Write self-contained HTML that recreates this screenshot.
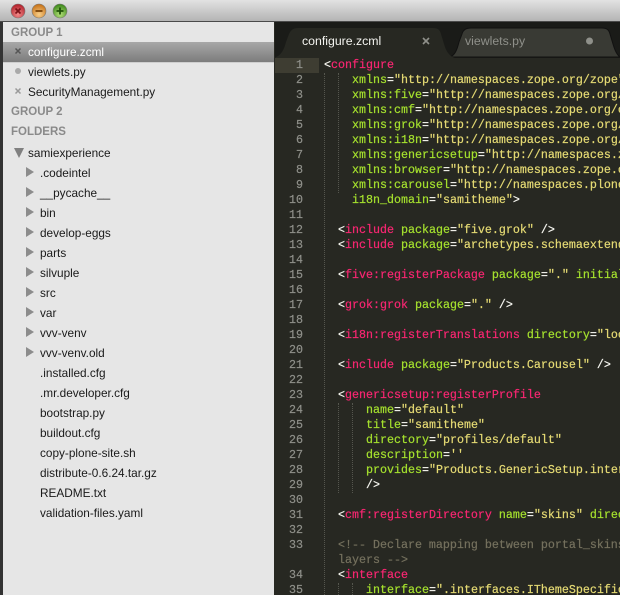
<!DOCTYPE html>
<html><head><meta charset="utf-8"><style>
html,body{margin:0;padding:0;background:#272822}
#r{position:relative;width:620px;height:595px;overflow:hidden;font-family:"Liberation Sans",sans-serif}
#r div{position:absolute}
.tb{left:0;top:0;width:620px;height:21px;background:linear-gradient(#e2e2e2,#b4b4b4);border-bottom:1px solid #4a4a4a}
.sb{left:3px;top:22px;width:271px;height:573px;background:#e6e6e6}
.h{left:11px;font-size:11.5px;font-weight:bold;color:#8a8a8a;line-height:14px}
.f{font-size:11.8px;color:#1a1a1a;line-height:14px;white-space:pre}
.sel{left:3px;top:42px;width:271px;height:20px;background:linear-gradient(#a8a8a8,#7c7c7c)}
.tabs{left:275px;top:22px;width:345px;height:36px;background:#1a1b18}
.gut{left:275px;width:28px;text-align:right;font:11.67px/15px "Liberation Mono",monospace;color:#8f908a;-webkit-text-stroke:.2px #8f908a}
.c{white-space:pre;font:11.67px/15px "Liberation Mono",monospace;color:#f8f8f2;-webkit-text-stroke:.2px}
.c i{font-style:normal}
.t{color:#f92672}.a{color:#a6e22e}.s{color:#e6db74}.m{color:#75715e}
.g{width:0;border-left:1px dotted #55564e}
</style></head><body><div id="r">
<div style="left:0;top:0;width:620px;height:595px;background:#272822"></div>
<div style="left:0;top:22px;width:3px;height:573px;background:#333"></div>
<div class="tb"></div>
<svg style="position:absolute;left:0;top:0" width="80" height="22">
<defs>
<radialGradient id="a1" cx=".5" cy=".75" r=".7"><stop offset="0" stop-color="#f28a8a"/><stop offset="1" stop-color="#b3222c"/></radialGradient>
<radialGradient id="a2" cx=".5" cy=".75" r=".7"><stop offset="0" stop-color="#f8cf8a"/><stop offset="1" stop-color="#c8741a"/></radialGradient>
<radialGradient id="a3" cx=".5" cy=".75" r=".7"><stop offset="0" stop-color="#b4e07a"/><stop offset="1" stop-color="#3f8a1c"/></radialGradient>
</defs>
<circle cx="18" cy="11" r="7" fill="url(#a1)" stroke="#777" stroke-width=".6"/>
<circle cx="39" cy="11" r="7" fill="url(#a2)" stroke="#777" stroke-width=".6"/>
<circle cx="60" cy="11" r="7" fill="url(#a3)" stroke="#777" stroke-width=".6"/>
<path d="M15.5 8.5l5 5M20.5 8.5l-5 5" stroke="#7a1218" stroke-width="1.6"/>
<path d="M35.5 11h7" stroke="#7a4308" stroke-width="1.8"/>
<path d="M56.5 11h7M60 7.500v7" stroke="#1f5208" stroke-width="1.8"/>
</svg>
<div class="sb"></div>
<div class="sel"></div>
<div style="left:3px;top:62px;width:271px;height:1px;background:#cfcfcf"></div>
<div class="h" style="top:26px">GROUP 1</div>
<div class="h" style="top:105px">GROUP 2</div>
<div class="h" style="top:125px">FOLDERS</div>
<svg style="position:absolute;left:0;top:0" width="60" height="360">
<path d="M15.500 48.500l5 5M20.500 48.500l-5 5" stroke="#555" stroke-width="1.5"/>
<circle cx="18" cy="71" r="3" fill="#aaa"/>
<path d="M15.500 88.500l5 5M20.500 88.500l-5 5" stroke="#999" stroke-width="1.5"/>
<path d="M14 148h10l-5 10z" fill="#808080"/>
<g fill="#8c8c8c">
<path d="M26 167v10l8-5z"/><path d="M26 187v10l8-5z"/><path d="M26 207v10l8-5z"/><path d="M26 227v10l8-5z"/>
<path d="M26 247v10l8-5z"/><path d="M26 267v10l8-5z"/><path d="M26 287v10l8-5z"/><path d="M26 307v10l8-5z"/>
<path d="M26 327v10l8-5z"/><path d="M26 347v10l8-5z"/>
</g>
</svg>
<div class="f" style="left:28px;top:45px;color:#fff">configure.zcml</div>
<div class="f" style="left:28px;top:65px">viewlets.py</div>
<div class="f" style="left:28px;top:85px">SecurityManagement.py</div>
<div class="f" style="left:28px;top:146px">samiexperience</div>
<div class="f" style="left:40px;top:166px">.codeintel</div>
<div class="f" style="left:40px;top:186px">__pycache__</div>
<div class="f" style="left:40px;top:206px">bin</div>
<div class="f" style="left:40px;top:226px">develop-eggs</div>
<div class="f" style="left:40px;top:246px">parts</div>
<div class="f" style="left:40px;top:266px">silvuple</div>
<div class="f" style="left:40px;top:286px">src</div>
<div class="f" style="left:40px;top:306px">var</div>
<div class="f" style="left:40px;top:326px">vvv-venv</div>
<div class="f" style="left:40px;top:346px">vvv-venv.old</div>
<div class="f" style="left:40px;top:366px">.installed.cfg</div>
<div class="f" style="left:40px;top:386px">.mr.developer.cfg</div>
<div class="f" style="left:40px;top:406px">bootstrap.py</div>
<div class="f" style="left:40px;top:426px">buildout.cfg</div>
<div class="f" style="left:40px;top:446px">copy-plone-site.sh</div>
<div class="f" style="left:40px;top:466px">distribute-0.6.24.tar.gz</div>
<div class="f" style="left:40px;top:486px">README.txt</div>
<div class="f" style="left:40px;top:506px">validation-files.yaml</div>

<div class="tabs"></div>
<svg style="position:absolute;left:275px;top:22px" width="345" height="36">
<path d="M175 35C180 33 182 28 184 20L187 12C188 8 191 6 196 6H327C332 6 334 8 335 12L338 22C340 29 342 33 345 35Z" fill="#393a34" stroke="#111" stroke-width="1"/>
<path d="M1 35C6 33 9 28 11 20L14 12C16 8 18 6 23 6H158C163 6 165 8 166 12L169 22C171 29 174 34 180 36H0Z" fill="#272822"/>
</svg>
<div style="left:302px;top:34px;font-size:12.3px;line-height:14px;color:#f4f4f0">configure.zcml</div>
<div style="left:465px;top:34px;font-size:12.300px;line-height:14px;color:#8f908a">viewlets.py</div>
<svg style="position:absolute;left:420px;top:35px" width="180" height="12">
<path d="M3 3l6 6M9 3l-6 6" stroke="#8f908a" stroke-width="1.6"/>
<circle cx="169.500" cy="6" r="3.500" fill="#8f908a"/>
</svg>
<div style="left:275px;top:58px;width:44px;height:15px;background:#3e3d32"></div>

<div class="g" style="left:324px;top:73px;height:522px"></div>
<div class="g" style="left:338px;top:73px;height:120px"></div>
<div class="g" style="left:338px;top:403px;height:90px"></div>
<div class="g" style="left:352px;top:403px;height:90px"></div>
<div class="g" style="left:338px;top:583px;height:12px"></div>
<div class="g" style="left:352px;top:583px;height:12px"></div>

<div class="gut" style="top:58px">1</div><div class="gut" style="top:73px">2</div><div class="gut" style="top:88px">3</div><div class="gut" style="top:103px">4</div><div class="gut" style="top:118px">5</div><div class="gut" style="top:133px">6</div><div class="gut" style="top:148px">7</div><div class="gut" style="top:163px">8</div><div class="gut" style="top:178px">9</div><div class="gut" style="top:193px">10</div><div class="gut" style="top:208px">11</div><div class="gut" style="top:223px">12</div><div class="gut" style="top:238px">13</div><div class="gut" style="top:253px">14</div><div class="gut" style="top:268px">15</div><div class="gut" style="top:283px">16</div><div class="gut" style="top:298px">17</div><div class="gut" style="top:313px">18</div><div class="gut" style="top:328px">19</div><div class="gut" style="top:343px">20</div><div class="gut" style="top:358px">21</div><div class="gut" style="top:373px">22</div><div class="gut" style="top:388px">23</div><div class="gut" style="top:403px">24</div><div class="gut" style="top:418px">25</div><div class="gut" style="top:433px">26</div><div class="gut" style="top:448px">27</div><div class="gut" style="top:463px">28</div><div class="gut" style="top:478px">29</div><div class="gut" style="top:493px">30</div><div class="gut" style="top:508px">31</div><div class="gut" style="top:523px">32</div><div class="gut" style="top:538px">33</div><div class="gut" style="top:568px">34</div><div class="gut" style="top:583px">35</div>

<div class="c" style="left:324px;top:58px">&lt;<i class="t">configure</i></div>
<div class="c" style="left:352px;top:73px"><i class="a">xmlns</i>=<i class="s">"http://namespaces.zope.org/zope"</i></div>
<div class="c" style="left:352px;top:88px"><i class="a">xmlns:five</i>=<i class="s">"http://namespaces.zope.org/five"</i></div>
<div class="c" style="left:352px;top:103px"><i class="a">xmlns:cmf</i>=<i class="s">"http://namespaces.zope.org/cmf"</i></div>
<div class="c" style="left:352px;top:118px"><i class="a">xmlns:grok</i>=<i class="s">"http://namespaces.zope.org/grok"</i></div>
<div class="c" style="left:352px;top:133px"><i class="a">xmlns:i18n</i>=<i class="s">"http://namespaces.zope.org/i18n"</i></div>
<div class="c" style="left:352px;top:148px"><i class="a">xmlns:genericsetup</i>=<i class="s">"http://namespaces.zope.org/genericsetup"</i></div>
<div class="c" style="left:352px;top:163px"><i class="a">xmlns:browser</i>=<i class="s">"http://namespaces.zope.org/browser"</i></div>
<div class="c" style="left:352px;top:178px"><i class="a">xmlns:carousel</i>=<i class="s">"http://namespaces.plone.org/carousel"</i></div>
<div class="c" style="left:352px;top:193px"><i class="a">i18n_domain</i>=<i class="s">"samitheme"</i>&gt;</div>
<div class="c" style="left:338px;top:223px">&lt;<i class="t">include</i> <i class="a">package</i>=<i class="s">"five.grok"</i> /&gt;</div>
<div class="c" style="left:338px;top:238px">&lt;<i class="t">include</i> <i class="a">package</i>=<i class="s">"archetypes.schemaextender"</i> /&gt;</div>
<div class="c" style="left:338px;top:268px">&lt;<i class="t">five:registerPackage</i> <i class="a">package</i>=<i class="s">"."</i> <i class="a">initialize</i>=<i class="s">".initialize"</i> /&gt;</div>
<div class="c" style="left:338px;top:298px">&lt;<i class="t">grok:grok</i> <i class="a">package</i>=<i class="s">"."</i> /&gt;</div>
<div class="c" style="left:338px;top:328px">&lt;<i class="t">i18n:registerTranslations</i> <i class="a">directory</i>=<i class="s">"locales"</i> /&gt;</div>
<div class="c" style="left:338px;top:358px">&lt;<i class="t">include</i> <i class="a">package</i>=<i class="s">"Products.Carousel"</i> /&gt;</div>
<div class="c" style="left:338px;top:388px">&lt;<i class="t">genericsetup:registerProfile</i></div>
<div class="c" style="left:366px;top:403px"><i class="a">name</i>=<i class="s">"default"</i></div>
<div class="c" style="left:366px;top:418px"><i class="a">title</i>=<i class="s">"samitheme"</i></div>
<div class="c" style="left:366px;top:433px"><i class="a">directory</i>=<i class="s">"profiles/default"</i></div>
<div class="c" style="left:366px;top:448px"><i class="a">description</i>=<i class="s">''</i></div>
<div class="c" style="left:366px;top:463px"><i class="a">provides</i>=<i class="s">"Products.GenericSetup.interfaces.EXTENSION"</i></div>
<div class="c" style="left:366px;top:478px">/&gt;</div>
<div class="c" style="left:338px;top:508px">&lt;<i class="t">cmf:registerDirectory</i> <i class="a">name</i>=<i class="s">"skins"</i> <i class="a">directory</i>=<i class="s">"skins"</i> /&gt;</div>
<div class="c m" style="left:338px;top:538px">&lt;!-- Declare mapping between portal_skins</div>
<div class="c m" style="left:338px;top:553px">layers --&gt;</div>
<div class="c" style="left:338px;top:568px">&lt;<i class="t">interface</i></div>
<div class="c" style="left:366px;top:583px"><i class="a">interface</i>=<i class="s">".interfaces.IThemeSpecific"</i></div>
</div></body></html>
